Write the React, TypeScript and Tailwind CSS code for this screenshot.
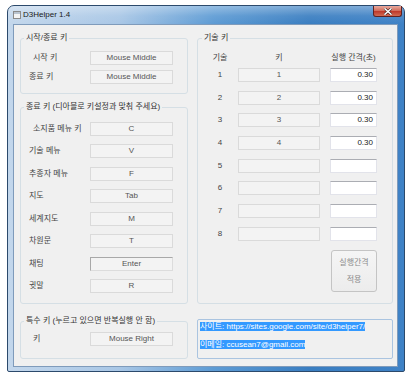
import React from "react";

function KeyField({ text, w = "w-[83px]", active = false }: { text: string; w?: string; active?: boolean }) {
  return (
    <div
      className={
        active
          ? `${w} h-[14px] border border-[#a8a8a8] border-b-[#dcdcdc] border-r-[#dcdcdc] bg-[#f3f3f3] text-center text-[8px] leading-[12px] text-[#555]`
          : `${w} h-[14px] border border-[#dadada] bg-[#f3f3f3] text-center text-[8px] leading-[12px] text-[#555]`
      }
    >
      {text}
    </div>
  );
}

function Row({ label, value, indent = false, active = false, h = "h-[14px]" }: { label: string; value: string; indent?: boolean; active?: boolean; h?: string }) {
  return (
    <div className={`flex ${h} items-center`}>
      <div className={indent ? "w-[61px] pl-[4px] text-[8px] text-[#444] whitespace-nowrap" : "w-[61px] text-[8px] text-[#444] whitespace-nowrap"}>{label}</div>
      <KeyField text={value} active={active} />
    </div>
  );
}

function SkillRow({ n, k, v }: { n: string; k: string; v: string }) {
  return (
    <div className="flex h-[14px] items-center">
      <div className="w-[30px] text-center text-[8px] text-[#444]">{n}</div>
      <div className="ml-[3px]">
        <KeyField text={k} w="w-[82px]" />
      </div>
      <div className="ml-[10px] h-[14px] w-[47px] border border-[#e2e3ea] border-t-[#abadb3] bg-white pr-[3px] text-right text-[8px] leading-[12px] text-[#222]">
        {v}
      </div>
    </div>
  );
}

export default function App() {
  return (
    <div className="h-[377px] w-[411px] overflow-hidden bg-white pl-[7px] pt-[5px] font-['Liberation_Sans','Noto_Sans_CJK_KR',sans-serif]">
      <div className="flex h-[367px] w-[398px] flex-col rounded-t-[7px] rounded-b-[2px] border border-[#2c4a6c] bg-[linear-gradient(90deg,#c3d7ec_0%,#a9c7e6_28%,#5d9bd4_52%,#3a7ec1_76%,#3f82c6_100%)]">
        {/* title bar */}
        <div className="flex h-[18px] items-start rounded-t-[6px] bg-[linear-gradient(180deg,rgba(255,255,255,0.35)_0%,rgba(255,255,255,0.08)_55%,rgba(255,255,255,0)_100%)]">
          <svg className="ml-[5px] mt-[5px]" width="8" height="8" viewBox="0 0 8 8">
            <rect x="0.5" y="0.5" width="7" height="7" fill="#f4f4f4" stroke="#8a8a8a" />
            <rect x="1" y="1" width="6" height="2" fill="#b9c4d0" />
          </svg>
          <div className="ml-[2px] mt-[4px] text-[8px] leading-[10px] text-[#1a1a1a]">D3Helper 1.4</div>
          <div className="ml-auto mr-[2px] flex h-[11px] w-[29px] items-center justify-center rounded-b-[3px] border border-t-0 border-[#5e2222] bg-[linear-gradient(180deg,#e8aaa0_0%,#d2705f_45%,#bf3b2c_55%,#cf6a52_100%)]">
            <svg width="8" height="7" viewBox="0 0 8 7">
              <path d="M1 0.8 L7 6.2 M7 0.8 L1 6.2" stroke="#3b1a1a" strokeWidth="2.6" strokeLinecap="square" />
              <path d="M1 0.8 L7 6.2 M7 0.8 L1 6.2" stroke="#ffffff" strokeWidth="1.5" strokeLinecap="square" />
            </svg>
          </div>
        </div>
        {/* body */}
        <div className="flex flex-1 pb-[4px] pl-[5px] pr-[6px]">
          <div className="flex flex-1 border border-[#7f9bbb] bg-[#f0f0f0] pl-[6px] pt-[8px]">
            {/* left column */}
            <div className="flex w-[168px] flex-col">
              <fieldset className="h-[61px] rounded-[3px] border border-[#d5dfe5]">
                <legend className="ml-[3px] px-[2px] text-[8px] leading-[10px] text-[#333]">시작/종료 키</legend>
                <div className="flex flex-col gap-[6px] pl-[8px] pt-[8px]">
                  <Row label="시작 키" value="Mouse Middle" indent h="h-[13px]" />
                  <Row label="종료 키" value="Mouse Middle" h="h-[13px]" />
                </div>
              </fieldset>
              <fieldset className="mt-[8px] h-[202px] rounded-[3px] border border-[#d5dfe5]">
                <legend className="ml-[3px] px-[2px] text-[8px] leading-[10px] text-[#333]">종료 키 (디아블로 키설정과 맞춰 주세요)</legend>
                <div className="flex flex-col gap-[8.43px] pl-[8px] pt-[10px]">
                  <Row label="소지품 메뉴 키" value="C" indent />
                  <Row label="기술 메뉴" value="V" />
                  <Row label="추종자 메뉴" value="F" />
                  <Row label="지도" value="Tab" />
                  <Row label="세계지도" value="M" />
                  <Row label="차원문" value="T" />
                  <Row label="채팅" value="Enter" active />
                  <Row label="귓말" value="R" />
                </div>
              </fieldset>
              <fieldset className="mt-[12px] h-[43px] rounded-[3px] border border-[#d5dfe5]">
                <legend className="ml-[3px] px-[2px] text-[8px] leading-[10px] text-[#333]">특수 키 (누르고 있으면 반복실행 안 함)</legend>
                <div className="pl-[8px] pt-[6px]">
                  <Row label="키" value="Mouse Right" indent />
                </div>
              </fieldset>
            </div>
            {/* right column */}
            <div className="ml-[9px] flex w-[196px] flex-col">
              <fieldset className="h-[271px] rounded-[3px] border border-[#d5dfe5]">
                <legend className="ml-[4px] px-[2px] text-[8px] leading-[10px] text-[#333]">기술 키</legend>
                <div className="pl-[7px] pr-[15px]">
                  <div className="mt-[8px] flex h-[14px] items-center text-[8px] text-[#444]">
                    <div className="w-[30px] text-center">기술</div>
                    <div className="ml-[3px] w-[82px] text-center">키</div>
                    <div className="ml-[10px] flex w-[47px] justify-center whitespace-nowrap">실행 간격(초)</div>
                  </div>
                  <div className="mt-[3px] flex flex-col gap-[8.7px]">
                    <SkillRow n="1" k="1" v="0.30" />
                    <SkillRow n="2" k="2" v="0.30" />
                    <SkillRow n="3" k="3" v="0.30" />
                    <SkillRow n="4" k="4" v="0.30" />
                    <SkillRow n="5" k="" v="" />
                    <SkillRow n="6" k="" v="" />
                    <SkillRow n="7" k="" v="" />
                    <SkillRow n="8" k="" v="" />
                  </div>
                  <div className="mt-[9px] flex justify-end">
                    <div className="flex h-[42px] w-[46px] flex-col items-center justify-center rounded-[3px] border border-[#c4c4c4] bg-[linear-gradient(180deg,#f5f5f5_0%,#ececec_100%)] text-[8px] leading-[17px] text-[#8c8c8c]">
                      <div>실행간격</div>
                      <div>적용</div>
                    </div>
                  </div>
                </div>
              </fieldset>
              <div className="mt-[15px] h-[40px] rounded-[2px] border border-[#aac4e0] bg-[#f0f0f0] pl-[2px] pt-[2px] text-[8px] leading-[10px] whitespace-nowrap">
                <div>
                  <span className="bg-[#3399ff] text-white">사이트: https://sites.google.com/site/d3helper7/</span>
                </div>
                <div className="mt-[8px]">
                  <span className="bg-[#3399ff] text-white">이메일: ccusean7@gmail.com</span>
                </div>
              </div>
            </div>
          </div>
        </div>
      </div>
    </div>
  );
}
